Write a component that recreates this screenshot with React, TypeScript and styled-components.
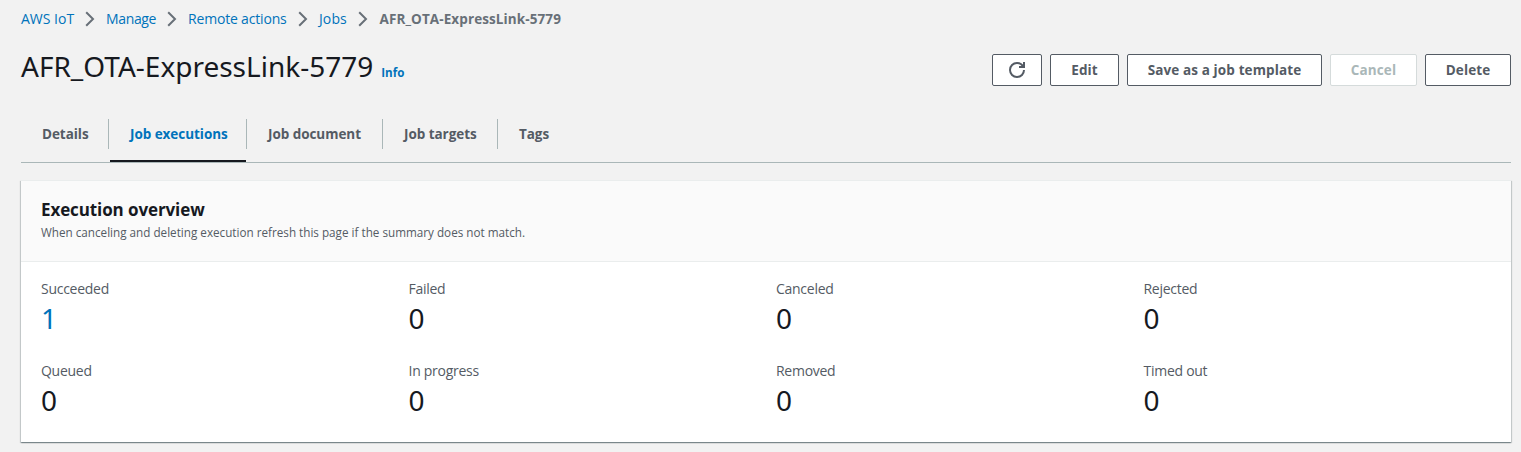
import React from "react";
import styled, { createGlobalStyle } from "styled-components";

const GlobalStyle = createGlobalStyle`
  *, *::before, *::after { box-sizing: border-box; }
  body {
    margin: 0;
    background: #f2f2f2;
    color: #16191f;
    font: 400 14px/22px "Open Sans", "Noto Sans", sans-serif;
  }
`;

const Page = styled.main`
  padding: 8px 10px 10px 21px;
`;

const Breadcrumbs = styled.nav`
  display: flex;
  align-items: center;
  height: 22px;
`;

const Crumb = styled.a<{ $width: number; $spacing?: number }>`
  width: ${(p) => p.$width}px;
  color: #0073bb;
  letter-spacing: ${(p) => p.$spacing ?? 0}px;
  white-space: nowrap;
  text-decoration: none;
`;

const CurrentCrumb = styled.span`
  padding-left: 0.5px;
  color: #687078;
  font-size: 13.5px;
  font-weight: 700;
  letter-spacing: 0.1px;
  white-space: nowrap;
`;

const CrumbArrow = styled.svg`
  flex: none;
  width: 10px;
  height: 16px;
  margin: 0 11px;
  fill: none;
  stroke: #687078;
  stroke-width: 2;
`;

const PageHeader = styled.header`
  display: flex;
  justify-content: space-between;
  align-items: flex-start;
  padding-top: 18px;
  height: 74px;
`;

const TitleGroup = styled.div`
  display: flex;
  align-items: baseline;
  gap: 8px;
`;

const Title = styled.h1`
  margin: 0;
  font: 400 28px/36px "Noto Sans", sans-serif;
`;

const InfoLink = styled.a`
  color: #0073bb;
  font-size: 11.6px;
  font-weight: 700;
`;

const Actions = styled.div`
  display: flex;
  gap: 8px;
  padding-top: 6px;
`;

const Button = styled.button<{ $width: number }>`
  display: flex;
  align-items: center;
  justify-content: center;
  width: ${(p) => p.$width}px;
  height: 32px;
  padding: 0;
  border: 1px solid #545b64;
  border-radius: 2px;
  background: #fff;
  color: #545b64;
  font: 700 13.5px/22px "Open Sans", sans-serif;
  letter-spacing: 0.12px;
  white-space: nowrap;

  &:disabled {
    border-color: #d5dbdb;
    color: #aab7b8;
  }
`;

const RefreshIcon = styled.svg`
  width: 16px;
  height: 16px;
  fill: none;
  stroke: currentColor;
  stroke-width: 2;
`;

const TabBar = styled.div`
  display: flex;
  height: 59px;
  padding-top: 15px;
  border-bottom: 1px solid #aab7b8;
`;

const Tab = styled.div<{ $width: number; $active?: boolean }>`
  display: flex;
  flex-direction: column;
  width: ${(p) => p.$width}px;
  color: ${(p) => (p.$active ? "#0073bb" : "#545b64")};
  font-size: 13.5px;
  font-weight: 700;
  letter-spacing: -0.05px;

  &::after {
    content: "";
    height: 2px;
    margin: 11px 1px 0;
    background: ${(p) => (p.$active ? "#16191f" : "transparent")};
  }
`;

const TabLabel = styled.span`
  height: 30px;
  padding: 4px 0 0 21px;
  border-right: 1px solid #aab7b8;
  white-space: nowrap;

  ${Tab}:last-child & {
    border-right: 0;
  }
`;

const Card = styled.section`
  margin-top: 17px;
  height: 262px;
  background: #fff;
  border-top: 1px solid #eaeded;
  box-shadow:
    0 1px 1px 0 rgba(0, 28, 36, 0.3),
    1px 1px 1px 0 rgba(0, 28, 36, 0.15),
    -1px 1px 1px 0 rgba(0, 28, 36, 0.15);
`;

const CardHeader = styled.header`
  height: 81px;
  padding: 17px 20px 0;
  background: #fafafa;
  border-bottom: 1px solid #eaeded;
`;

const CardTitle = styled.h2`
  margin: 0;
  font-size: 17px;
  line-height: 23px;
  font-weight: 700;
  letter-spacing: -0.1px;
`;

const CardDescription = styled.p`
  margin: 2px 0 0;
  color: #545b64;
  font-size: 11.7px;
  line-height: 18px;
`;

const StatGrid = styled.div`
  display: grid;
  grid-template-columns: repeat(4, 1fr);
  gap: 24px 20px;
  padding: 16px 20px 24px;
`;

const StatLabel = styled.div`
  color: #545b64;
  letter-spacing: -0.27px;
`;

const StatValue = styled.div<{ $link?: boolean }>`
  color: ${(p) => (p.$link ? "#0073bb" : "#16191f")};
  font: 400 28px/36px "Noto Sans", sans-serif;
  height: 36px;
`;

const crumbs = [
  { label: "AWS IoT", width: 53 },
  { label: "Manage", width: 50, spacing: -0.35 },
  { label: "Remote actions", width: 99, spacing: -0.18 },
  { label: "Jobs", width: 28, spacing: 0.1 },
];

const tabs = [
  { label: "Details", width: 88 },
  { label: "Job executions", width: 138, active: true },
  { label: "Job document", width: 136 },
  { label: "Job targets", width: 115 },
  { label: "Tags", width: 72 },
];

const stats = [
  { label: "Succeeded", value: 1 },
  { label: "Failed", value: 0 },
  { label: "Canceled", value: 0 },
  { label: "Rejected", value: 0 },
  { label: "Queued", value: 0 },
  { label: "In progress", value: 0 },
  { label: "Removed", value: 0 },
  { label: "Timed out", value: 0 },
];

export default function App() {
  return (
    <>
      <GlobalStyle />
      <Page>
        <Breadcrumbs>
          {crumbs.map((c) => (
            <React.Fragment key={c.label}>
              <Crumb $width={c.width} $spacing={c.spacing}>
                {c.label}
              </Crumb>
              <CrumbArrow viewBox="0 0 10 16">
                <path d="M1.2 1.2L8 8L1.2 14.8" />
              </CrumbArrow>
            </React.Fragment>
          ))}
          <CurrentCrumb>AFR_OTA-ExpressLink-5779</CurrentCrumb>
        </Breadcrumbs>

        <PageHeader>
          <TitleGroup>
            <Title>AFR_OTA-ExpressLink-5779</Title>
            <InfoLink>Info</InfoLink>
          </TitleGroup>
          <Actions>
            <Button $width={50} aria-label="Refresh">
              <RefreshIcon viewBox="0 0 16 16">
                <path d="M10 5h5V0" />
                <path d="M15 8a6.957 6.957 0 0 1-7 7 6.957 6.957 0 0 1-7-7 6.957 6.957 0 0 1 7-7 6.87 6.87 0 0 1 6.3 4" />
              </RefreshIcon>
            </Button>
            <Button $width={69}>Edit</Button>
            <Button $width={195}>Save as a job template</Button>
            <Button $width={87} disabled>
              Cancel
            </Button>
            <Button $width={86}>Delete</Button>
          </Actions>
        </PageHeader>

        <TabBar>
          {tabs.map((t) => (
            <Tab key={t.label} $width={t.width} $active={t.active}>
              <TabLabel>{t.label}</TabLabel>
            </Tab>
          ))}
        </TabBar>

        <Card>
          <CardHeader>
            <CardTitle>Execution overview</CardTitle>
            <CardDescription>
              When canceling and deleting execution refresh this page if the summary does not match.
            </CardDescription>
          </CardHeader>
          <StatGrid>
            {stats.map((s) => (
              <div key={s.label}>
                <StatLabel>{s.label}</StatLabel>
                <StatValue $link={s.value > 0}>{s.value}</StatValue>
              </div>
            ))}
          </StatGrid>
        </Card>
      </Page>
    </>
  );
}
